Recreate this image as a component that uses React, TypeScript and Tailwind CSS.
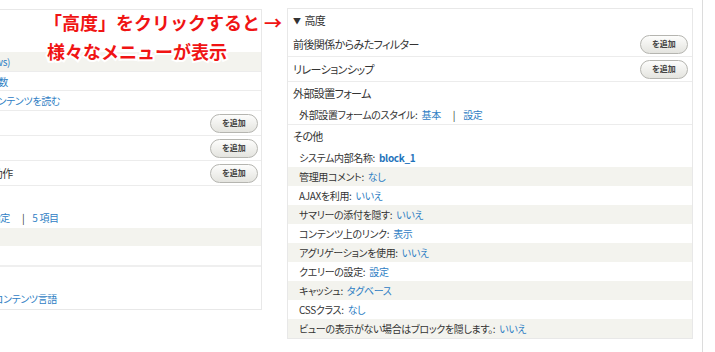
const JP = "font-['Noto_Sans_CJK_JP','Noto_Sans',sans-serif] [font-feature-settings:'palt']";

function AddButton() {
  return (
    <button
      type="button"
      className="h-[19px] w-[48px] shrink-0 rounded-full border border-[#b5b5b0] bg-linear-to-b from-[#fdfdfc] to-[#e4e4df] text-[8px] font-bold leading-none tracking-normal text-[#444]"
    >
      を追加
    </button>
  );
}

const LINK = 'text-[#2f80c4]';

/* settings rows under "その他", alternating stripes */
const OTHER_ROWS = [
  { label: '管理用コメント', value: 'なし' },
  { label: 'AJAXを利用', value: 'いいえ' },
  { label: 'サマリーの添付を隠す', value: 'いいえ' },
  { label: 'コンテンツ上のリンク', value: '表示' },
  { label: 'アグリゲーションを使用', value: 'いいえ' },
  { label: 'クエリーの設定', value: '設定' },
  { label: 'キャッシュ', value: 'タグベース' },
  { label: 'CSSクラス', value: 'なし' },
  { label: 'ビューの表示がない場合はブロックを隠します。', value: 'いいえ' },
];

function LeftPanel() {
  return (
    <div className="mt-[9px] flex h-[301px] w-[262px] shrink-0 flex-col border-y border-r border-[#e8e8e8] text-[10px] tracking-[-0.35px] text-[#333]">
      <div className="h-[42px]" />
      {/* text is right-anchored so its start runs off the left edge */}
      <div className="flex h-[19px] items-center bg-[#f3f3ee]">
        <div className="flex w-[10px] shrink-0 justify-end">
          <span className={`whitespace-nowrap ${LINK}`}>Lists (Views)</span>
        </div>
      </div>
      <div className="flex h-[19px] items-center border-t border-[#ececec]">
        <div className="flex w-[8px] shrink-0 justify-end">
          <span className={`whitespace-nowrap ${LINK}`}>アイテム数</span>
        </div>
      </div>
      <div className="flex h-[20px] items-center border-t border-[#ececec]">
        <div className="flex w-[60px] shrink-0 justify-end">
          <span className={`whitespace-nowrap ${LINK}`}>コンテンツを読む</span>
        </div>
      </div>
      <div className="flex h-[25px] items-center justify-end border-t border-[#ececec] pr-[3px]">
        <AddButton />
      </div>
      <div className="flex h-[25px] items-center justify-end border-t border-[#ececec] pr-[3px]">
        <AddButton />
      </div>
      <div className="flex h-[25px] items-center justify-between border-t border-[#ececec] pr-[3px] text-[11px]">
        <div className="flex w-[13px] shrink-0 justify-end">
          <span className="whitespace-nowrap">結果なしの場合の動作</span>
        </div>
        <AddButton />
      </div>
      <div className="flex h-[43px] items-end border-t border-[#ececec] pb-[3px]">
        <div className="flex w-[10px] shrink-0 justify-end">
          <span className={`whitespace-nowrap ${LINK}`}>指定</span>
        </div>
        <span className="ml-[12px]">|</span>
        <span className={`ml-[8px] ${LINK}`}>5 項目</span>
      </div>
      <div className="h-[18px] bg-[#f3f3ee]" />
      <div className="h-[19px]" />
      <div className="flex h-[44px] items-end border-t-2 border-[#efefef] pb-[3px]">
        <div className="flex w-[57px] shrink-0 justify-end">
          <span className={`whitespace-nowrap ${LINK}`}>コンテンツ言語</span>
        </div>
      </div>
    </div>
  );
}

function RightPanel() {
  return (
    <div className="mt-[8px] flex w-[406px] shrink-0 flex-col self-start border border-[#e8e8e8] text-[#333]">
      <div className="flex h-[23px] items-center pl-[5px] text-[11px] tracking-[-0.6px]">
        <span className="mr-[4px] text-[8px]">▼</span>高度
      </div>
      <div className="flex h-[25px] items-center justify-between border-b border-[#ececec] pr-[4px] pl-[5px] text-[11px] tracking-[-0.6px]">
        <span>前後関係からみたフィルター</span>
        <AddButton />
      </div>
      <div className="flex h-[25px] items-center justify-between border-b border-[#ececec] pr-[4px] pl-[5px] text-[11px] tracking-[-0.6px]">
        <span>リレーションシップ</span>
        <AddButton />
      </div>
      <div className="flex h-[22px] items-center pl-[5px] text-[11px] tracking-[-0.6px]">外部設置フォーム</div>
      <div className="flex h-[21px] items-center border-b border-[#ececec] pl-[11px] text-[10px] tracking-[-0.35px]">
        <span>外部設置フォームのスタイル:</span>
        <span className={`ml-[4px] ${LINK}`}>基本</span>
        <span className="ml-[12px]">|</span>
        <span className={`ml-[8px] ${LINK}`}>設定</span>
      </div>
      <div className="flex h-[23px] items-center pl-[5px] text-[11px] tracking-[-0.6px]">その他</div>
      <div className="flex h-[19px] items-center pl-[11px] text-[10px] tracking-[-0.35px]">
        <span>システム内部名称:</span>
        <span className="ml-[4px] font-bold text-[#1f74bb]">block_1</span>
      </div>
      {OTHER_ROWS.map((row, i) => (
        <div
          key={row.label}
          className={`flex h-[19px] items-center pl-[11px] text-[10px] tracking-[-0.35px] ${i % 2 === 0 ? 'bg-[#f3f3ee]' : 'bg-white'}`}
        >
          <span>{row.label}:</span>
          <span className={`ml-[4px] ${LINK}`}>{row.value}</span>
        </div>
      ))}
    </div>
  );
}

export default function App() {
  return (
    <div className={`relative h-[352px] w-[715px] overflow-hidden bg-white ${JP}`}>
      <div className="flex h-full">
        <LeftPanel />
        <div className="w-[25px] shrink-0" />
        <RightPanel />
        <div className="w-[9px] shrink-0" />
        <div className="h-full w-px shrink-0 bg-[#dcdcdc]" />
      </div>

      {/* red callout over the panels */}
      <div className="absolute top-[8px] left-[44px] font-['Noto_Sans_CJK_JP',sans-serif] text-[18px] leading-[29px] font-bold text-[#f01414] [font-feature-settings:normal] [-webkit-text-stroke:4px_white] [paint-order:stroke_fill]">
        <div className="whitespace-nowrap">「高度」をクリックすると →</div>
        <div className="ml-[3px] whitespace-nowrap">様々なメニューが表示</div>
      </div>
    </div>
  );
}
